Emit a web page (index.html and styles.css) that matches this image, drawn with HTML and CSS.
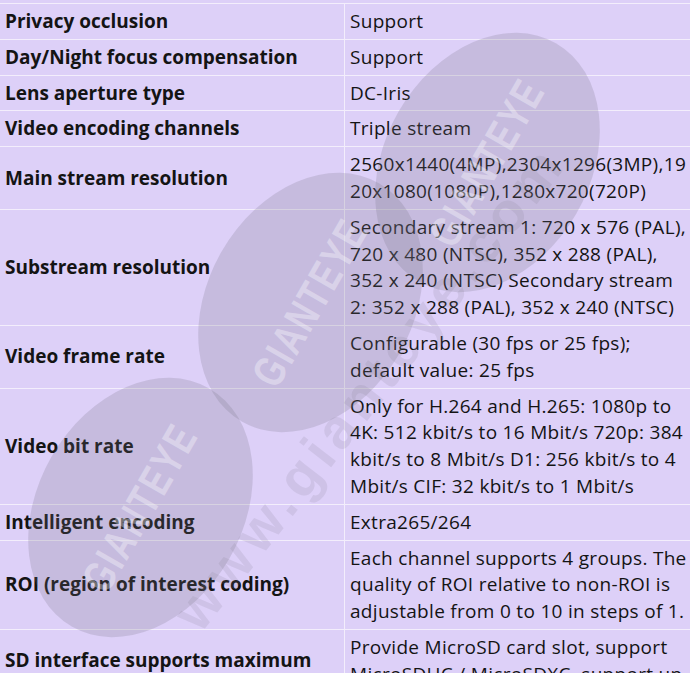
FILE: index.html
```html
<!DOCTYPE html>
<html lang="en">
<head>
  <meta charset="UTF-8" />
  <title>Specifications</title>
  <link rel="stylesheet" href="styles.css">
</head>
<body>
  <div class="page">
    <table class="specs">
      <tr>
        <td class="label">Privacy occlusion</td>
        <td class="value">Support</td>
      </tr>
      <tr>
        <td class="label">Day/Night focus compensation</td>
        <td class="value">Support</td>
      </tr>
      <tr>
        <td class="label">Lens aperture type</td>
        <td class="value">DC-Iris</td>
      </tr>
      <tr>
        <td class="label">Video encoding channels</td>
        <td class="value">Triple stream</td>
      </tr>
      <tr>
        <td class="label">Main stream resolution</td>
        <td class="value">2560x1440(4MP),2304x1296(3MP),1920x1080(1080P),1280x720(720P)</td>
      </tr>
      <tr>
        <td class="label">Substream resolution</td>
        <td class="value">Secondary stream 1: 720 x 576 (PAL), 720 x 480 (NTSC), 352 x 288 (PAL), 352 x 240 (NTSC) Secondary stream 2: 352 x 288 (PAL), 352 x 240 (NTSC)</td>
      </tr>
      <tr>
        <td class="label">Video frame rate</td>
        <td class="value">Configurable (30 fps or 25 fps); default value: 25 fps</td>
      </tr>
      <tr>
        <td class="label">Video bit rate</td>
        <td class="value">Only for H.264 and H.265: 1080p to 4K: 512 kbit/s to 16 Mbit/s 720p: 384 kbit/s to 8 Mbit/s D1: 256 kbit/s to 4 Mbit/s CIF: 32 kbit/s to 1 Mbit/s</td>
      </tr>
      <tr>
        <td class="label">Intelligent encoding</td>
        <td class="value">Extra265/264</td>
      </tr>
      <tr>
        <td class="label">ROI (region of interest coding)</td>
        <td class="value">Each channel supports 4 groups. The quality of ROI relative to non-ROI is adjustable from 0 to 10 in steps of 1.</td>
      </tr>
      <tr>
        <td class="label">SD interface supports maximum capacity</td>
        <td class="value">Provide MicroSD card slot, support MicroSDHC / MicroSDXC, support up to 256GB</td>
      </tr>
    </table>

    <div class="watermark">
      <div class="seal seal-1"><span>GIANTEYE</span></div>
      <div class="seal seal-2"><span>GIANTEYE</span></div>
      <div class="seal seal-3"><span>GIANTEYE</span></div>
      <div class="site">www.gianteye.com</div>
    </div>
  </div>
</body>
</html>
```

FILE: styles.css
```css
body {
  margin: 0;
  background-color: #ddd0f8;
  color: #141414;
  font-family: 'Open Sans', 'Noto Sans', sans-serif;
  font-size: 19px;
}

.page {
  position: relative;
  overflow: hidden;
  height: 100vh;
  padding-top: 3px;
  box-sizing: border-box;
}

.specs {
  width: 692px;
  border-collapse: collapse;
  table-layout: fixed;
}

.specs td {
  border: 1px solid #f3eefc;
  padding: 4px 5px;
  line-height: 26.8px;
  vertical-align: middle;
  overflow-wrap: break-word;
}

.label {
  width: 334px;
  border-left: none !important;
  font-weight: 700;
}

.value {
  width: 337px;
  letter-spacing: 0.3px;
}

.watermark {
  position: absolute;
  inset: 0;
  pointer-events: none;
}

.seal {
  position: absolute;
  width: 205px;
  height: 275px;
  border-radius: 50%;
  background: rgba(120, 115, 130, 0.22);
  transform: rotate(30deg);
  display: flex;
  align-items: center;
  justify-content: center;
}

.seal span {
  transform: rotate(-90deg) scaleY(1.35);
  font-family: 'Liberation Sans', sans-serif;
  font-weight: 700;
  font-size: 33px;
  letter-spacing: 2px;
  color: rgba(255, 255, 255, 0.35);
}

.seal-1 {
  left: 385px;
  top: 25px;
}

.seal-2 {
  left: 208px;
  top: 165px;
}

.seal-3 {
  left: 38px;
  top: 370px;
}

.site {
  position: absolute;
  left: 185px;
  top: 590px;
  transform: rotate(-52deg);
  transform-origin: left center;
  font-family: 'Liberation Sans', sans-serif;
  font-weight: 700;
  font-size: 56px;
  letter-spacing: 6px;
  color: rgba(130, 125, 140, 0.16);
  white-space: nowrap;
}
```
